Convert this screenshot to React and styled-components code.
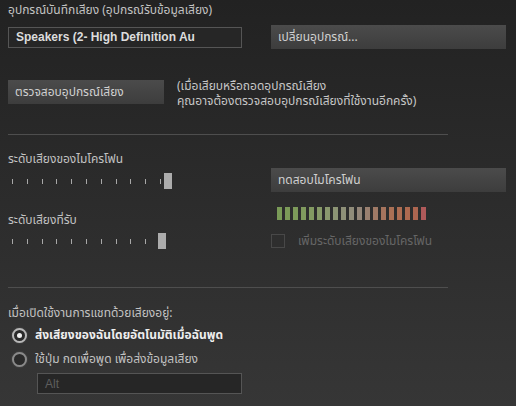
import React from "react";
import styled, { createGlobalStyle } from "styled-components";

const Global = createGlobalStyle`
  html, body {
    margin: 0;
    padding: 0;
  }
  body {
    width: 516px;
    height: 406px;
    overflow: hidden;
    background: linear-gradient(180deg, #222222 0%, #2c2c2c 50%, #363636 100%);
    font-family: Tahoma, "Noto Sans Thai", "DejaVu Sans", "Liberation Sans", sans-serif;
    font-size: 12px;
    color: #c4c4c4;
  }
`;

const Page = styled.div`
  padding: 2px 8px 0 8px;
  width: 516px;
  height: 406px;
  box-sizing: border-box;
`;

const Label = styled.div`
  line-height: 16px;
  color: ${(p) => p.color || "#c2c2c2"};
  margin-top: ${(p) => p.mt || 0}px;
`;

const Row = styled.div`
  display: grid;
  grid-template-columns: 234px 235px;
  column-gap: 29px;
  align-items: center;
  margin-top: ${(p) => p.mt || 0}px;
`;

const TextBox = styled.div`
  height: 21px;
  box-sizing: border-box;
  border: 1px solid #555555;
  background: #262626;
  padding: 0 7px;
  display: flex;
  align-items: center;
  font-family: Tahoma, "Liberation Sans", sans-serif;
  font-weight: ${(p) => (p.dim ? 400 : 700)};
  font-size: 12px;
  color: ${(p) => (p.dim ? "#5e5e5e" : "#dcdcdc")};
  width: ${(p) => p.w || 234}px;
  margin-left: ${(p) => p.ml || 0}px;
  margin-top: ${(p) => p.mt || 0}px;
`;

const Button = styled.div`
  height: 24px;
  box-sizing: border-box;
  width: ${(p) => p.w}px;
  background: linear-gradient(180deg, #4b4b4b 0%, #3d3d3d 100%);
  color: #d0d0d0;
  padding: 0 7px;
  display: flex;
  align-items: center;
  font-size: 12px;
  margin-top: ${(p) => p.mt || 0}px;
  flex-shrink: 0;
`;

const CheckRow = styled.div`
  display: flex;
  align-items: flex-start;
  gap: ${(p) => p.gap || 13}px;
  margin-top: ${(p) => p.mt || 0}px;
`;

const Note = styled.div`
  line-height: 15px;
  color: #c6c6c6;
  margin-top: ${(p) => p.mt || 0}px;
`;

const Divider = styled.div`
  width: 440px;
  height: 1px;
  background: #4e4e4e;
  margin-top: ${(p) => p.mt}px;
`;

const Columns = styled.div`
  display: grid;
  grid-template-columns: 234px 235px;
  column-gap: 29px;
`;

const Col = styled.div`
  display: flex;
  flex-direction: column;
`;

const SliderBox = styled.div`
  position: relative;
  width: 170px;
  height: 16px;
  margin-top: ${(p) => p.mt || 0}px;
`;

const Ticks = styled.div`
  display: flex;
  justify-content: space-between;
  width: ${(p) => p.w}px;
  margin-left: 4px;
  padding-top: 6px;
`;

const Tick = styled.span`
  width: 1px;
  height: 5px;
  background: #a8a8a8;
`;

const Thumb = styled.span`
  position: absolute;
  top: 0;
  width: 8px;
  height: 16px;
  background: #acacac;
`;

const Meter = styled.div`
  display: flex;
  gap: 3px;
  margin: 15px 0 0 6px;
`;

const Bar = styled.span`
  width: 5px;
  height: 13px;
  background: ${(p) => p.c};
`;

const CheckBox = styled.span`
  width: 14px;
  height: 14px;
  box-sizing: border-box;
  border: 1px solid #484848;
  background: #2e2e2e;
  flex-shrink: 0;
`;

const CheckLabel = styled.span`
  color: #666666;
  line-height: 14px;
`;

const RadioRow = styled.div`
  display: flex;
  align-items: center;
  gap: 8px;
  height: 16px;
  margin-top: ${(p) => p.mt}px;
  margin-left: 4px;
  color: ${(p) => (p.on ? "#eeeeee" : "#c2c2c2")};
  font-weight: ${(p) => (p.on ? 700 : 400)};
`;

const Radio = styled.span`
  width: 15px;
  height: 15px;
  box-sizing: border-box;
  border-radius: 50%;
  border: 2px solid ${(p) => (p.on ? "#b8b8b8" : "#8a8a8a")};
  background: #2a2a2a;
  display: flex;
  align-items: center;
  justify-content: center;
  box-shadow: 0 0 2px rgba(200, 200, 200, 0.25);

  &::after {
    content: "";
    width: 5px;
    height: 5px;
    border-radius: 50%;
    background: ${(p) => (p.on ? "#f2f2f2" : "transparent")};
  }
`;

const meterColors = [
  "#799a57", "#7b9a58", "#7d9a5a", "#809a5e", "#839a62", "#879a68",
  "#8a986e", "#8c9474", "#8e9078", "#908c7a", "#948679", "#9a8070",
  "#a07a66", "#a6745d", "#aa7055", "#ad6d52", "#ae6a50", "#ad6650",
  "#b05a5a",
];

const Slider = ({ ticks, span, thumb, mt }) => (
  <SliderBox mt={mt}>
    <Ticks w={span}>
      {Array.from({ length: ticks }).map((_, i) => (
        <Tick key={i} />
      ))}
    </Ticks>
    <Thumb style={{ left: thumb }} />
  </SliderBox>
);

export default function App() {
  return (
    <>
      <Global />
      <Page>
        <Label>อุปกรณ์บันทึกเสียง (อุปกรณ์รับข้อมูลเสียง)</Label>

        <Row mt={7}>
          <TextBox>Speakers (2- High Definition Au</TextBox>
          <Button w={235}>เปลี่ยนอุปกรณ์...</Button>
        </Row>

        <CheckRow>
          <Button w={156} mt={31}>ตรวจสอบอุปกรณ์เสียง</Button>
          <Note mt={30}>
            (เมื่อเสียบหรือถอดอุปกรณ์เสียง
            <br />
            คุณอาจต้องตรวจสอบอุปกรณ์เสียงที่ใช้งานอีกครั้ง)
          </Note>
        </CheckRow>

        <Divider mt={25} />

        <Columns>
          <Col>
            <Label mt={16}>ระดับเสียงของไมโครโฟน</Label>
            <Slider ticks={11} span={149} thumb={156} mt={6} />
            <Label mt={23}>ระดับเสียงที่รับ</Label>
            <Slider ticks={11} span={149} thumb={150} mt={5} />
          </Col>
          <Col>
            <Button w={235} mt={33}>ทดสอบไมโครโฟน</Button>
            <Meter>
              {meterColors.map((c, i) => (
                <Bar key={i} c={c} />
              ))}
            </Meter>
            <CheckRow mt={14}>
              <CheckBox />
              <CheckLabel>เพิ่มระดับเสียงของไมโครโฟน</CheckLabel>
            </CheckRow>
          </Col>
        </Columns>

        <Divider mt={38} />

        <Label mt={17}>เมื่อเปิดใช้งานการแชทด้วยเสียงอยู่:</Label>
        <RadioRow on mt={6}>
          <Radio on />
          ส่งเสียงของฉันโดยอัตโนมัติเมื่อฉันพูด
        </RadioRow>
        <RadioRow mt={8}>
          <Radio />
          ใช้ปุ่ม กดเพื่อพูด เพื่อส่งข้อมูลเสียง
        </RadioRow>
        <TextBox dim w={205} ml={29} mt={6}>Alt</TextBox>
      </Page>
    </>
  );
}
